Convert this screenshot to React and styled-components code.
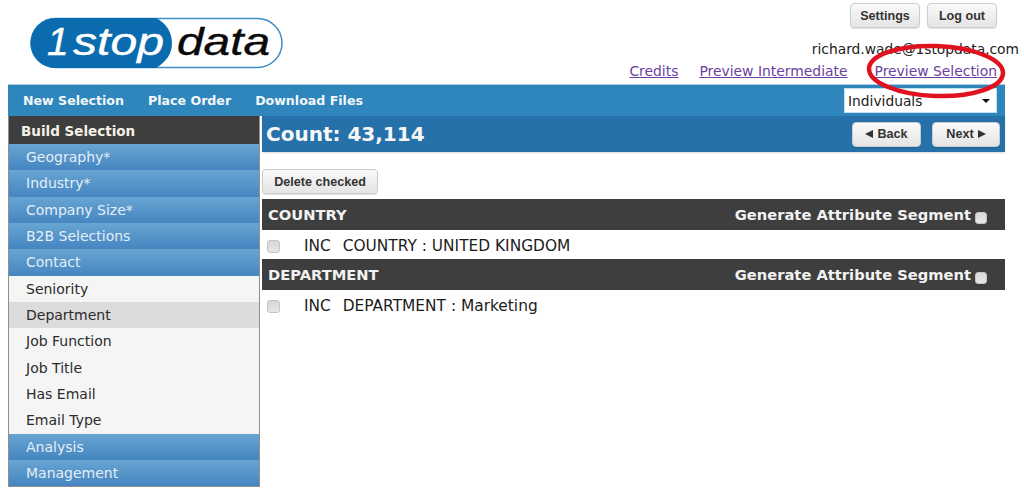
import React from "react";
import styled, { createGlobalStyle } from "styled-components";

const GlobalStyle = createGlobalStyle`
  html, body {
    margin: 0;
    background: #fff;
    font-family: "DejaVu Sans", Verdana, sans-serif;
    overflow: hidden;
  }
`;

const Page = styled.div`
  position: relative;
  width: 1024px;
  height: 498px;
  padding: 0 19px 0 8px;
  box-sizing: border-box;
  display: flex;
  flex-direction: column;
`;

const Header = styled.header`
  height: 84px;
  display: flex;
  justify-content: space-between;
`;

const LogoWrap = styled.div`
  padding: 17px 0 0 22px;
`;

const HeaderRight = styled.div`
  display: flex;
  flex-direction: column;
  align-items: flex-end;
  padding-top: 3px;
`;

const TopButtons = styled.div`
  display: flex;
  gap: 7px;
  margin-right: 8px;
`;

const Button = styled.button`
  display: inline-flex;
  align-items: center;
  justify-content: center;
  gap: 4px;
  font-family: "Liberation Sans", Arial, sans-serif;
  font-size: 12.6px;
  font-weight: 700;
  color: #333;
  width: ${(p) => p.$w}px;
  height: 25px;
  padding: 0;
  border: 1px solid #ccc;
  border-radius: 4px;
  background: linear-gradient(#fafafa, #e4e4e4);
  box-shadow: 0 1px 1px rgba(0, 0, 0, 0.12);
  white-space: nowrap;
`;

const Arrow = styled.i`
  width: 0;
  height: 0;
  border-top: 4.5px solid transparent;
  border-bottom: 4.5px solid transparent;
  ${(p) => (p.$left ? "border-right: 8px solid #333;" : "border-left: 8px solid #333;")}
`;

const Email = styled.div`
  font-size: 13.8px;
  line-height: 17px;
  color: #222;
  margin-top: 13px;
  margin-right: -14px;
  white-space: nowrap;
`;

const HeaderLinks = styled.div`
  display: flex;
  margin-top: 5px;
  margin-right: 8px;
`;

const HeaderLink = styled.a`
  font-size: 13.9px;
  line-height: 17px;
  margin-left: ${(p) => p.$gap || 0}px;
  color: #6b3fa0;
  text-decoration: underline;
  white-space: nowrap;
`;

const Ring = styled.svg`
  position: absolute;
  left: 862px;
  top: 40px;
  pointer-events: none;
`;

const NavBar = styled.nav`
  height: 32px;
  background: #2e86bd;
  border-top: 1px solid #a9cbe0;
  box-sizing: border-box;
  display: flex;
  align-items: center;
  padding: 0 8px 0 15px;
  gap: 24px;
`;

const NavItem = styled.span`
  font-size: 12.6px;
  font-weight: 700;
  color: #f3f7fa;
  white-space: nowrap;
`;

const SelectBox = styled.div`
  margin-left: auto;
  width: 153px;
  height: 25px;
  box-sizing: border-box;
  background: #fff;
  border: 1px solid #bfe0f2;
  display: flex;
  align-items: center;
  justify-content: space-between;
  padding: 0 6px 0 3px;
  font-size: 13.8px;
  color: #222;
`;

const Caret = styled.i`
  width: 0;
  height: 0;
  border-left: 4px solid transparent;
  border-right: 4px solid transparent;
  border-top: 4px solid #111;
`;

const Body = styled.div`
  display: flex;
  gap: 2px;
`;

const Sidebar = styled.aside`
  width: 252px;
  height: 371px;
  box-sizing: border-box;
  border: 1px solid #8f8f8f;
  border-top: none;
  background: #f5f5f5;
  flex-shrink: 0;
  overflow: hidden;
`;

const SideTitle = styled.div`
  height: 28px;
  background: #3e3e3e;
  color: #f5f1e6;
  font-size: 13.5px;
  font-weight: 700;
  line-height: 30px;
  padding-left: 12px;
`;

const SideItem = styled.div`
  height: 26.35px;
  line-height: 27.5px;
  box-sizing: border-box;
  padding-left: 17px;
  font-size: 14px;
  white-space: nowrap;
  ${(p) =>
    p.$group
      ? "color: #e4eef6; background: linear-gradient(#68a5d2, #4585c1);"
      : p.$active
      ? "color: #2b2b2b; background: #dcdcdc;"
      : "color: #2b2b2b; background: #f5f5f5;"}
`;

const Main = styled.main`
  flex: 1;
  min-width: 0;
`;

const CountBar = styled.div`
  height: 36px;
  background: #2671a9;
  box-shadow: 0 1px 2px rgba(0, 0, 0, 0.15);
  display: flex;
  align-items: center;
  justify-content: space-between;
  padding: 0 5px 0 4px;
`;

const Count = styled.span`
  font-size: 20px;
  font-weight: 700;
  color: #f7f7f7;
  white-space: nowrap;
`;

const BarButtons = styled.div`
  display: flex;
  gap: 11px;
`;

const DeleteRow = styled.div`
  padding-top: 17px;
  height: 47px;
  box-sizing: border-box;
`;

const SectionHead = styled.div`
  height: 31px;
  background: #3e3e3e;
  color: #f2f2f2;
  display: flex;
  align-items: center;
  justify-content: space-between;
  padding: 0 18px 0 6px;
  font-size: 14.7px;
  font-weight: 700;
  white-space: nowrap;
`;

const Generate = styled.span`
  display: flex;
  align-items: center;
  gap: 4px;
`;

const Check = styled.span`
  display: inline-block;
  box-sizing: border-box;
  width: ${(p) => p.$size || 13}px;
  height: ${(p) => p.$size || 13}px;
  margin-top: ${(p) => (p.$size ? 6 : 0)}px;
  border: 1px solid #c4c4c4;
  border-radius: 3px;
  background: linear-gradient(#d8d8d8, #e6e6e6);
  flex-shrink: 0;
`;

const SelectionRow = styled.div`
  height: 29px;
  display: flex;
  align-items: center;
  padding: 3px 0 0 5px;
  box-sizing: border-box;
  font-size: 15.4px;
  color: #1c1c1c;
  white-space: pre;
`;

const RowText = styled.span`
  margin-left: 24px;
`;

const RowKind = styled.span`
  margin-right: 7px;
`;

const logoFont = "Liberation Sans, Arial, sans-serif";

const Logo = () => (
  <svg width="254" height="53" viewBox="0 0 254 53">
    <rect x="1" y="1.5" width="251" height="49" rx="24.5" fill="#fff" stroke="#3d8fc8" strokeWidth="1.5" />
    <path d="M25.5 1 H126 C136 6 142 15 142 26 C142 37 136 45 126 51 H25.5 A25 25 0 0 1 25.5 1 Z" fill="#0a6cae" />
    <g fontFamily={logoFont} fontStyle="italic" fontSize="39" stroke="currentColor" strokeWidth="0.4">
      <text x="17" y="38" fill="#fff" color="#fff">1</text>
      <text x="43" y="38" fill="#fff" color="#fff" textLength="91" lengthAdjust="spacingAndGlyphs">stop</text>
      <text x="147" y="38" fill="#0a0a0a" color="#0a0a0a" textLength="93" lengthAdjust="spacingAndGlyphs">data</text>
    </g>
  </svg>
);

const groups = ["Geography*", "Industry*", "Company Size*", "B2B Selections", "Contact"];
const subItems = ["Seniority", "Department", "Job Function", "Job Title", "Has Email", "Email Type"];

export default function App() {
  return (
    <Page>
      <GlobalStyle />
      <Header>
        <LogoWrap>
          <Logo />
        </LogoWrap>
        <HeaderRight>
          <TopButtons>
            <Button $w={70}>Settings</Button>
            <Button $w={70}>Log out</Button>
          </TopButtons>
          <Email>richard.wade@1stopdata.com</Email>
          <HeaderLinks>
            <HeaderLink>Credits</HeaderLink>
            <HeaderLink $gap={21}>Preview Intermediate</HeaderLink>
            <HeaderLink $gap={27}>Preview Selection</HeaderLink>
          </HeaderLinks>
        </HeaderRight>
      </Header>
      <NavBar>
        <NavItem>New Selection</NavItem>
        <NavItem>Place Order</NavItem>
        <NavItem>Download Files</NavItem>
        <SelectBox>
          Individuals
          <Caret />
        </SelectBox>
      </NavBar>
      <Body>
        <Sidebar>
          <SideTitle>Build Selection</SideTitle>
          {groups.map((g) => (
            <SideItem key={g} $group>
              {g}
            </SideItem>
          ))}
          {subItems.map((s) => (
            <SideItem key={s} $active={s === "Department"}>
              {s}
            </SideItem>
          ))}
          <SideItem $group>Analysis</SideItem>
          <SideItem $group>Management</SideItem>
        </Sidebar>
        <Main>
          <CountBar>
            <Count>Count: 43,114</Count>
            <BarButtons>
              <Button $w={69}><Arrow $left /> Back</Button>
              <Button $w={68}>Next <Arrow /></Button>
            </BarButtons>
          </CountBar>
          <DeleteRow>
            <Button $w={116}>Delete checked</Button>
          </DeleteRow>
          <SectionHead>
            COUNTRY
            <Generate>
              Generate Attribute Segment <Check $size={12} />
            </Generate>
          </SectionHead>
          <SelectionRow>
            <Check />
            <RowText><RowKind>INC</RowKind> COUNTRY : UNITED KINGDOM</RowText>
          </SelectionRow>
          <SectionHead>
            DEPARTMENT
            <Generate>
              Generate Attribute Segment <Check $size={12} />
            </Generate>
          </SectionHead>
          <SelectionRow>
            <Check />
            <RowText><RowKind>INC</RowKind> DEPARTMENT : Marketing</RowText>
          </SelectionRow>
        </Main>
      </Body>
      <Ring width="150" height="64" viewBox="0 0 150 64">
        <ellipse cx="74" cy="31" rx="67" ry="25" fill="none" stroke="#e0121f" strokeWidth="4.5" transform="rotate(2 74 31)" />
      </Ring>
    </Page>
  );
}
